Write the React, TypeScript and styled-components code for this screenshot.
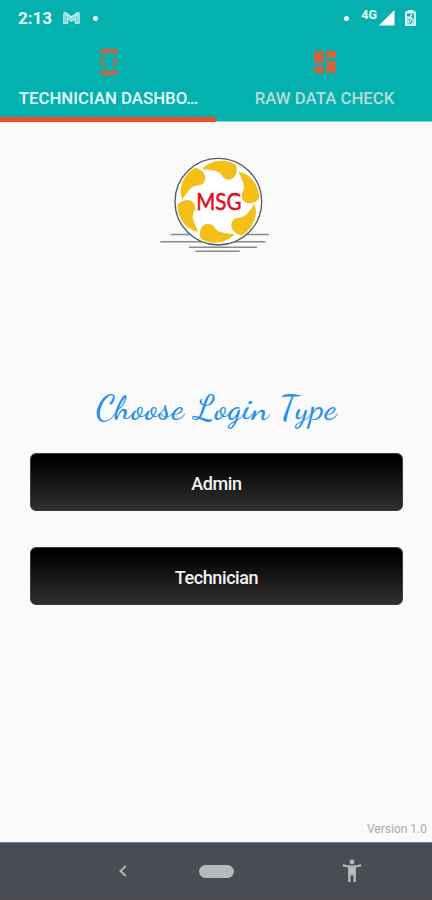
import React from "react";
import styled, { createGlobalStyle } from "styled-components";

const GlobalStyle = createGlobalStyle`
  * { box-sizing: border-box; }
  body { margin: 0; background: #fafafa; font-family: Roboto, sans-serif; }
`;

const Screen = styled.div`
  width: 432px;
  height: 900px;
  display: flex;
  flex-direction: column;
  overflow: hidden;
  background: #fafafa;
`;

const Header = styled.header`
  height: 122px;
  flex: none;
  background: #04b1af;
  border-bottom: 1px solid #7fd6d5;
`;

const StatusBar = styled.div`
  height: 36px;
  display: flex;
  align-items: center;
  padding: 0 16px 0 18px;
  color: #effffe;
`;

const Clock = styled.span`
  width: 45px;
  font-size: 17px;
  font-weight: 700;
  line-height: 36px;
`;

const Dot = styled.i<{ $gap: number }>`
  width: 5px;
  height: 5px;
  border-radius: 50%;
  background: #effffe;
  margin-left: ${(p) => p.$gap}px;
`;

const Spacer = styled.div`
  flex: 1;
`;

const Network = styled.span`
  font-size: 12.5px;
  font-weight: 700;
  line-height: 14px;
  margin: -6px 2px 0 12px;
`;

const BatterySlot = styled.span`
  display: flex;
  margin-left: 10px;
`;

const Tabs = styled.nav`
  display: grid;
  grid-template-columns: 1fr 1fr;
  height: 86px;
`;

const Tab = styled.div<{ $active?: boolean }>`
  display: flex;
  flex-direction: column;
  align-items: center;
  min-width: 0;
  height: 86px;
  padding: 11px 0 0 1px;
  color: ${(p) => (p.$active ? "#e4fffd" : "#b5dcd8")};
  border-bottom: ${(p) => (p.$active ? "5px solid #ee4d27" : "0")};
`;

const TabLabel = styled.span`
  margin-top: 11px;
  font-size: 16.8px;
  font-weight: 500;
  line-height: 20px;
  white-space: nowrap;
`;

const Content = styled.main`
  flex: 1;
  display: flex;
  flex-direction: column;
  align-items: center;
  padding: 23px 29px 0 30px;
`;

const LogoSlot = styled.div`
  width: 130px;
  height: 115px;
  margin-right: 3px;
`;

const Title = styled.h1`
  height: 60px;
  margin: 118px 0 15px;
  font-family: "Dancing Script", cursive;
  font-size: 35px;
  line-height: 60px;
  font-weight: 500;
  letter-spacing: 0.75px;
  white-space: nowrap;
  color: #2490ea;
`;

const LoginButton = styled.button`
  width: 373px;
  height: 58px;
  flex: none;
  margin-bottom: 36px;
  padding: 2px 0 0;
  border: 1px solid #3c3c3c;
  border-radius: 6px;
  background: linear-gradient(#000 8%, #2e2e2e 96%);
  color: #f2f2f2;
  font: 500 18px Roboto, sans-serif;
  letter-spacing: -0.4px;
`;

const Version = styled.span`
  align-self: flex-end;
  margin: auto -24px 5px 0;
  font-size: 12px;
  line-height: 16px;
  color: #a9a9a9;
`;

const NavBar = styled.footer`
  height: 58px;
  flex: none;
  display: flex;
  align-items: center;
  padding-left: 117px;
  background: #454e53;
  border-top: 1px solid #7c8386;
  border-bottom: 1px solid #51484d;
`;

const HomePill = styled.i`
  width: 35px;
  height: 13px;
  margin: 0 108px 0 71px;
  border-radius: 7px;
  background: #b4babd;
`;

const MailIcon = () => (
  <svg width="17" height="14" viewBox="0 0 18 14" fill="none" stroke="#d5f7f5">
    <path d="M1 12.5V2.5Q1 .8 3 1.6L9 6l6-4.4q2-.8 2 .9v10h-3.8V7.3L9 10.3 4.8 7.3v5.2z" strokeWidth="1.4" />
    <path d="M2 3l7 5 7-5M3 4v8M15 4v8" strokeWidth="1.1" />
  </svg>
);

const SignalIcon = () => (
  <svg width="16" height="16" viewBox="0 0 16 16">
    <path d="M15.5 0v15.5H0z" fill="#fff" />
  </svg>
);

const BatteryIcon = () => (
  <svg width="11" height="16" viewBox="0 0 11 16" fill="none" stroke="#e8ffff">
    <path d="M3.5 2V.8h4V2M1 2.5h9v12.7H1z" strokeWidth="1.8" />
    <path d="M3 6v7h1.5M7 4.5 4 8.2h3L4.7 12M8 9v4.5H6.3" strokeWidth="1.3" />
  </svg>
);

const DeviceIcon = () => (
  <svg width="20" height="30" viewBox="0 0 20 30" fill="none" stroke="#cb6642">
    <path d="M2.5 8V4.4q0-1.4 1.4-1.4h12.2q1.4 0 1.4 1.4V8M2.5 22v3.6q0 1.4 1.4 1.4h12.2q1.4 0 1.4-1.4V22" strokeWidth="1.8" />
    <path d="M2.5 4.4h15M2.5 25.6h15" strokeWidth="3.7" />
    <path d="M6.2 10.8 2.2 15l4 4.2M13.8 10.8l4 4.2-4 4.2" strokeWidth="2" />
  </svg>
);

const DashboardIcon = () => (
  <svg width="24" height="30" viewBox="0 0 24 30" fill="#cb6642">
    <path d="M1 4h9.8v12H1zM13.2 4H23v7h-9.8zM1 19h9.8v7H1zM13.2 14H23v12h-9.8z" />
  </svg>
);

const Logo = () => (
  <svg width="130" height="115" viewBox="0 0 390 345">
    <g stroke="#8a8a8a" strokeWidth="4.5">
      <path d="M62 268.5h295M31 290.5h315" />
      <path d="M117 307h204M136 319h133" />
    </g>
    <circle cx="205" cy="170" r="130" fill="#fff" stroke="#555a65" strokeWidth="4" />
    <g fill="#f4c018">
      {[0, 60, 120, 180, 240, 300].map((angle) => (
        <path
          key={angle}
          transform={`rotate(${angle} 205 170)`}
          d="M157 72C182 43 226 40 258 59C266 84 253 105 234 104C217 102 218 90 206 82C192 74 176 76 157 72Z"
        />
      ))}
    </g>
    <text x="139" y="195" textLength="135" lengthAdjust="spacingAndGlyphs" fontFamily="Lato, sans-serif" fontSize="68" fontWeight="400" fill="#d91324" stroke="#d91324" strokeWidth="1.8">
      MSG
    </text>
  </svg>
);

const BackIcon = () => (
  <svg width="11" height="14" viewBox="0 0 11 14" fill="none" stroke="#b4babd" strokeWidth="2">
    <path d="M8.8 1.9 3.6 7l5.2 5.1" />
  </svg>
);

const AccessibilityIcon = () => (
  <svg width="20" height="24" viewBox="0 0 20 24" fill="#b4babd">
    <circle cx="10" cy="3" r="2.4" />
    <path d="M1 5.3q9 2.4 18 0l.4 2-5.5 1.3V23h-2.4v-6.5h-3V23H6.1V8.6L.6 7.3z" />
  </svg>
);

export default function App() {
  return (
    <Screen>
      <GlobalStyle />
      <Header>
        <StatusBar>
          <Clock>2:13</Clock>
          <MailIcon />
          <Dot $gap={13} />
          <Spacer />
          <Dot $gap={0} />
          <Network>4G</Network>
          <SignalIcon />
          <BatterySlot>
            <BatteryIcon />
          </BatterySlot>
        </StatusBar>
        <Tabs>
          <Tab $active>
            <DeviceIcon />
            <TabLabel>TECHNICIAN DASHBO…</TabLabel>
          </Tab>
          <Tab>
            <DashboardIcon />
            <TabLabel>RAW DATA CHECK</TabLabel>
          </Tab>
        </Tabs>
      </Header>
      <Content>
        <LogoSlot>
          <Logo />
        </LogoSlot>
        <Title>Choose Login Type</Title>
        <LoginButton>Admin</LoginButton>
        <LoginButton>Technician</LoginButton>
        <Version>Version 1.0</Version>
      </Content>
      <NavBar>
        <BackIcon />
        <HomePill />
        <AccessibilityIcon />
      </NavBar>
    </Screen>
  );
}
